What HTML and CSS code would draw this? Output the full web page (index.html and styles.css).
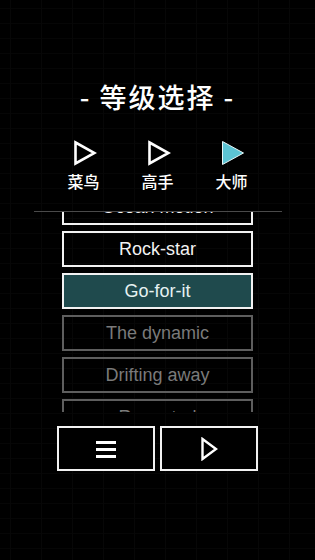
FILE: index.html
```html
<!DOCTYPE html>
<html lang="zh">
<head>
<meta charset="utf-8">
<title>等级选择</title>
<link rel="stylesheet" href="styles.css">
</head>
<body>
<div class="screen">
  <h1 class="title">- 等级选择 -</h1>
  <div class="levels">
    <div class="level">
      <svg class="tri" width="24" height="26" viewBox="0 0 24 26"><path d="M2.5 2.5 L21.5 13 L2.5 23.5 Z" fill="none" stroke="#fff" stroke-width="2.6" stroke-linejoin="miter"/></svg>
      <span class="label">菜鸟</span>
    </div>
    <div class="level">
      <svg class="tri" width="24" height="26" viewBox="0 0 24 26"><path d="M2.5 2.5 L21.5 13 L2.5 23.5 Z" fill="none" stroke="#fff" stroke-width="2.6" stroke-linejoin="miter"/></svg>
      <span class="label">高手</span>
    </div>
    <div class="level">
      <svg class="tri" width="24" height="26" viewBox="0 0 24 26"><path d="M1.5 1.5 L22.5 13 L1.5 24.5 Z" fill="#5cc4d4" stroke="#e8f6f8" stroke-width="1"/></svg>
      <span class="label">大师</span>
    </div>
  </div>
  <div class="viewport">
    <ul class="songs">
      <li class="song">Ocean motion</li>
      <li class="song">Rock-star</li>
      <li class="song active">Go-for-it</li>
      <li class="song locked">The dynamic</li>
      <li class="song locked">Drifting away</li>
      <li class="song locked">Repeated</li>
    </ul>
  </div>
  <div class="actions">
    <button class="btn" aria-label="menu">
      <svg width="22" height="20" viewBox="0 0 22 20"><rect x="1" y="2" width="20" height="3" fill="#fff"/><rect x="1" y="9" width="20" height="3" fill="#fff"/><rect x="1" y="16" width="20" height="3" fill="#fff"/></svg>
    </button>
    <button class="btn" aria-label="play">
      <svg width="18" height="24" viewBox="0 0 18 24"><path d="M2.5 2 L16 12 L2.5 22 Z" fill="none" stroke="#fff" stroke-width="2.4"/></svg>
    </button>
  </div>
</div>
</body>
</html>
```
FILE: styles.css
```css
html, body {
  margin: 0;
  padding: 0;
  background: #000;
}
body {
  width: 315px;
  height: 560px;
  overflow: hidden;
  font-family: "Liberation Sans", "Noto Sans CJK SC", Arial, sans-serif;
  color: #fff;
  background-color: #000;
  background-image:
    linear-gradient(to right, #070707 1px, transparent 1px),
    linear-gradient(to bottom, #060606 1px, transparent 1px);
  background-size: 31px 15px;
  background-position: 10px 8px;
}
.screen {
  display: flex;
  flex-direction: column;
  align-items: center;
  padding-top: 82px;
}
.title {
  margin: 0;
  font-family: "Noto Sans CJK SC", "Liberation Sans", sans-serif;
  font-weight: 500;
  font-size: 27px;
  line-height: 30px;
  letter-spacing: 2px;
  color: #fff;
}
.levels {
  display: flex;
  margin-top: 28px;
}
.level {
  width: 74px;
  display: flex;
  flex-direction: column;
  align-items: center;
}
.tri {
  display: block;
  margin-left: 2px;
}
.label {
  margin-top: 5px;
  font-family: "Noto Sans CJK SC", sans-serif;
  font-weight: 500;
  font-size: 16px;
  line-height: 20px;
  color: #fff;
}
.viewport {
  margin-top: 20px;
  width: 248px;
  height: 200px;
  overflow: hidden;
  border-top: 1px solid #4a4a4a;
  display: flex;
  justify-content: center;
}
.songs {
  list-style: none;
  margin: -23px 0 0;
  padding: 0;
  width: 191px;
}
.song {
  box-sizing: border-box;
  height: 36px;
  margin-bottom: 6px;
  border: 2px solid #f2f2f2;
  display: flex;
  align-items: center;
  justify-content: center;
  font-size: 18px;
  color: #f2f2f2;
}
.song.active {
  background: #1f4a4d;
  color: #e6f2f2;
}
.song.locked {
  border-color: #5e5e5e;
  color: #7a7a7a;
}
.actions {
  display: flex;
  gap: 5px;
  margin-top: 14px;
}
.btn {
  box-sizing: border-box;
  width: 98px;
  height: 45px;
  background: #000;
  border: 2px solid #f2f2f2;
  padding: 0;
  display: flex;
  align-items: center;
  justify-content: center;
  cursor: pointer;
}
.btn svg {
  display: block;
}
```
